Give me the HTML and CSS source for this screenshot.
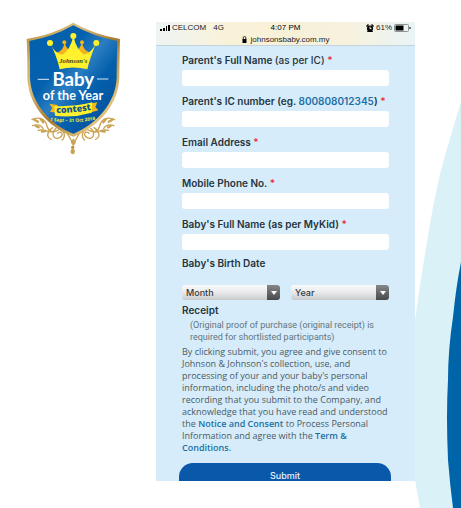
FILE: index.html
```html
<!DOCTYPE html>
<html lang="en">
<head>
<meta charset="utf-8">
<meta name="viewport" content="width=device-width, initial-scale=1">
<title>Baby of the Year Contest</title>
<link rel="stylesheet" href="styles.css">
</head>
<body>
<svg class="waves" viewBox="0 0 61 508" preserveAspectRatio="none" aria-hidden="true">
  <path fill="#daf1f7" d="M61 102Q51 134 41 170Q33 204 27 242Q20 284 15 320C9 375 10 430 15 480L20 508H61Z"/>
  <path fill="#0064a8" d="M61 262Q56 287 53 317Q48 350 48 380Q46 415 48 460Q50 485 53 508H61Z"/>
</svg>
<div class="page">
  <aside class="brand">
    <svg class="logo" viewBox="0 0 330 450" role="img" aria-label="Johnson's Baby of the Year contest">
      <defs>
        <linearGradient id="gold" x1="0" x2="1" y1="0" y2="1">
          <stop offset="0" stop-color="#b98d3e"/><stop offset=".3" stop-color="#dcc07c"/><stop offset=".55" stop-color="#a9782d"/><stop offset=".8" stop-color="#dfc27b"/><stop offset="1" stop-color="#b4873c"/>
        </linearGradient>
        <linearGradient id="blue" x1="0" x2="1" y1="0" y2="1">
          <stop offset="0" stop-color="#0260ac"/><stop offset=".35" stop-color="#0561ad"/><stop offset=".5" stop-color="#2a7dc1"/><stop offset=".65" stop-color="#0560ac"/><stop offset="1" stop-color="#024a96"/>
        </linearGradient>
        <path id="ribbonLine" d="M100 294Q160 295 222 283"/>
        <path id="dateLine" d="M78 315Q160 329 238 312"/>
        <g id="flourish" fill="none" stroke="#c9a253" stroke-width="4" stroke-linecap="round">
          <path d="M36 314C54 305 75 310 80 330C85 352 102 355 120 342C130 333 119 322 111 332"/>
          <path d="M38 332C55 326 64 332 69 341M55 346C72 342 78 350 96 351"/>
          <path d="M98 338C82 348 77 365 93 373M108 340C92 355 100 377 119 368C134 359 123 345 113 355"/>
          <path d="M122 345C137 350 135 369 126 375M128 347C148 350 148 375 159 383"/>
          <path stroke-width="7" d="M43 314L54 320M62 312L70 322M48 333L56 337M66 350L76 348"/>
        </g>
      </defs>
      <use href="#flourish"/>
      <use href="#flourish" transform="matrix(-1 0 0 1 320 0)"/>
      <path fill="#c9a253" d="M160 370L168 382L160 394L152 382Z"/>
      <circle cx="158" cy="397" r="5" fill="#b98d3e"/>
      <path fill="#c9a253" d="M158 399C169 406 165 416 158 418C151 416 148 407 158 399Z"/>
      <path fill="url(#gold)" d="M160 23Q222 58 300 72Q298 140 298 186C297 265 238 335 160 365C80 335 23 265 22 186Q23 140 20 72Q98 59 160 23Z"/>
      <path fill="url(#blue)" d="M160 31Q222 65 292 78Q290 140 290 186C289 260 232 327 160 356C87 327 31 260 30 186Q31 140 28 78Q98 66 160 31Z"/>
      <g fill="#f5b320">
        <circle cx="133" cy="82" r="6"/><circle cx="186" cy="82" r="6"/>
        <path d="M110 114Q132 106 133 82Q140 106 160 112Q180 105 186 82Q190 108 210 113L195 140H125Z"/>
      </g>
      <g fill="#fff12d">
        <circle cx="90" cy="84" r="9"/><circle cx="160" cy="63" r="9"/><circle cx="229" cy="84" r="9"/>
        <path d="M90 84Q104 116 127 119Q151 105 160 63Q170 106 193 119Q215 113 229 84Q209 130 202 163Q160 152 119 163Q111 124 90 84Z"/>
      </g>
      <text class="logo-script" x="160" y="143">Johnson's</text>
      <path stroke="#dbe9f5" stroke-width="3" d="M53 193H87M231 192H265"/>
      <text class="logo-title" x="160" y="213">Baby</text>
      <text class="logo-subtitle" x="159" y="254">of the Year</text>
      <path fill="#f2b719" d="M88 266L113 270V294L90 290L97 279ZM207 266L232 262L226 276L235 286L207 294Z"/>
      <path fill="#fff12d" d="M103 273Q160 276 217 262L215 293Q160 309 105 302Z"/>
      <text class="logo-contest"><textPath href="#ribbonLine" startOffset="50%">contest</textPath></text>
      <text class="logo-date"><textPath href="#dateLine" startOffset="50%">1 Sept – 31 Oct 2018</textPath></text>
    </svg>
  </aside>

  <main class="phone">
    <header class="status">
      <div class="carrier">
        <svg class="signal" viewBox="0 0 10 6" aria-hidden="true"><path d="M0 4h2v2H0zM3 3h2v3H3zM6 1h1v5H6zM8 0h2v6H8z"/></svg>
        <span>CELCOM</span><span>4G</span>
      </div>
      <div class="clock">4:07 PM</div>
      <div class="power">
        <svg class="alarm" viewBox="0 0 8 8" aria-hidden="true"><circle cx="4" cy="4.5" r="3.1"/><path d="M0 2L2 0l1 1-2 2zM8 2L6 0 5 1l2 2zM1 8l1-2h4l1 2z"/><path class="hands" d="M4 2.7v2h1.5"/></svg>
        <span>61%</span>
        <svg class="battery" viewBox="0 0 17 8" aria-hidden="true"><rect class="case" x=".5" y=".5" width="14" height="7" rx="1"/><path d="M1.5 1.5h8v5h-8zM15.5 3h1v2h-1z"/></svg>
      </div>
      <div class="address">
        <svg class="lock" viewBox="0 0 5 7" aria-hidden="true"><path d="M.5 3h4v4h-4z"/><path class="shackle" d="M1.2 3V1.8a1.3 1.3 0 0 1 2.6 0V3"/></svg>
        <span>johnsonsbaby.com.my</span>
      </div>
    </header>

    <form class="form">
      <div class="field">
        <label for="parent">Parent's Full Name <span class="light">(as per IC)</span> <span class="req">*</span></label>
        <input id="parent" type="text">
      </div>
      <div class="field">
        <label for="ic">Parent's IC number (eg. <span class="sample">800808012345</span>) <span class="req">*</span></label>
        <input id="ic" type="text">
      </div>
      <div class="field">
        <label for="email">Email Address <span class="req">*</span></label>
        <input id="email" type="email">
      </div>
      <div class="field">
        <label for="mobile">Mobile Phone No. <span class="req">*</span></label>
        <input id="mobile" type="tel">
      </div>
      <div class="field">
        <label for="baby">Baby's Full Name (as per MyKid) <span class="req">*</span></label>
        <input id="baby" type="text">
      </div>
      <fieldset class="birth">
        <legend>Baby's Birth Date</legend>
        <div class="selects">
          <div class="select">
            <select aria-label="Month"><option>Month</option></select>
            <span class="arrow"></span>
          </div>
          <div class="select">
            <select aria-label="Year"><option>Year</option></select>
            <span class="arrow"></span>
          </div>
        </div>
      </fieldset>
      <h2 class="heading">Receipt</h2>
      <p class="hint">(Original proof of purchase (original receipt) is required for shortlisted participants)</p>
      <p class="consent">By clicking submit, you agree and give consent to Johnson &amp; Johnson's collection, use, and processing of your and your baby's personal information, including the photo/s and video recording that you submit to the Company, and acknowledge that you have read and understood the <a href="#">Notice and Consent</a> to Process Personal Information and agree with the <a href="#">Term &amp;<br>Conditions.</a></p>
      <button class="submit" type="submit">Submit</button>
    </form>
  </main>
</div>
</body>
</html>
```

FILE: styles.css
```css
* {
  box-sizing: border-box;
}

body {
  margin: 0;
  min-height: 100vh;
  position: relative;
  background: #fff;
  color: #26343d;
  font: 500 8px/12px Inter, "Liberation Sans", sans-serif;
}

.waves {
  position: absolute;
  top: 0;
  right: 0;
  width: 61px;
  height: 100%;
}

.page {
  position: relative;
  display: grid;
  grid-template-columns: 156fr 259fr 46fr;
  align-items: start;
}

.brand {
  padding: 15px 26px 0 20px;
}

.logo {
  display: block;
  width: 100%;
}

.logo text {
  text-anchor: middle;
}

.logo-script {
  font: italic 700 20px "Liberation Serif", serif;
  fill: #39421e;
}

.logo-title {
  font: 700 56px Lato, sans-serif;
  fill: #fff;
}

.logo-subtitle {
  font: 700 38px Lato, sans-serif;
  fill: #fff;
}

.logo-contest {
  font: 800 27px "Open Sans", sans-serif;
  fill: #15578c;
}

.logo-date {
  font: 700 14px "Open Sans", sans-serif;
  fill: #f4ed3b;
}

.phone {
  margin-top: 22px;
  background: #d6ecfa;
}

.status {
  display: grid;
  grid-template-columns: 1fr auto 1fr;
  align-items: center;
  padding: 0 4px;
  border-bottom: 1px solid #c3d3da;
  background: linear-gradient(90deg, #eef4f3, #faf2d8 30%, #f7f0d9 55%, #f7f2df 75%, #eaf4f7);
  color: #222;
  font: 8px/12px "Liberation Sans", sans-serif;
}

.carrier,
.power,
.address {
  display: flex;
  align-items: center;
}

.carrier {
  gap: 7px;
}

.signal {
  width: 10px;
  height: 6px;
  margin-right: -5px;
}

.clock {
  color: #000;
}

.power {
  justify-content: flex-end;
  gap: 2px;
}

.alarm {
  width: 8px;
  height: 8px;
}

.hands {
  fill: none;
  stroke: #fff;
  stroke-width: 1;
}

.battery {
  width: 17px;
  height: 8px;
}

.case {
  fill: none;
  stroke: #8e9292;
}

.address {
  grid-column: 1 / -1;
  justify-content: center;
  gap: 4px;
  line-height: 11px;
}

.lock {
  width: 5px;
  height: 7px;
}

.shackle {
  fill: none;
  stroke: #222;
}

.form {
  padding: 8px 26px 0;
}

.field {
  display: grid;
  gap: 4px;
  margin-bottom: 9px;
}

label,
legend,
.heading {
  padding: 0;
  font-size: 10px;
  font-weight: 600;
  line-height: 12px;
}

.light {
  font-weight: 500;
}

.sample {
  color: #1c70a8;
}

.req {
  color: #e8333d;
}

input {
  width: 100%;
  height: 16px;
  padding: 0 6px;
  border: 0;
  border-radius: 3px;
  background: #fff;
  font: inherit;
}

.birth {
  margin: -2px 0 4px;
  padding: 0;
  border: 0;
}

.selects {
  display: grid;
  grid-template-columns: 1fr 1fr;
  gap: 11px;
  padding-top: 16px;
}

.select {
  position: relative;
}

select {
  display: block;
  width: 100%;
  height: 15px;
  padding: 0 16px 0 4px;
  border: 0;
  border-radius: 3px;
  appearance: none;
  background: linear-gradient(#fafafa, #e9e9eb 50%, #c8cacc);
  color: #333b40;
  font: 500 9px/15px Inter, sans-serif;
}

.arrow {
  position: absolute;
  inset: 0 0 0 auto;
  display: grid;
  place-items: center;
  width: 13px;
  border-radius: 0 3px 3px 0;
  background: linear-gradient(#858789, #48494b);
  pointer-events: none;
}

.arrow::before {
  content: "";
  border: 3px solid transparent;
  border-top: 4px solid #fff;
  border-bottom: 0;
}

.heading {
  margin: 0 0 3px;
}

.hint {
  margin: 0 0 3px;
  padding-left: 8px;
  color: #64747d;
  font: 400 9px/12px Roboto, sans-serif;
}

.consent {
  margin: 0 1px 9px 0;
  color: #4a5a64;
  font: 500 9px/12px "Open Sans", sans-serif;
}

.consent a {
  color: #1c70a0;
  font-weight: 600;
  text-decoration: none;
}

.submit {
  display: block;
  width: calc(100% + 5px);
  margin: 0 -3px;
  padding: 7px 0 0;
  border: 0;
  border-radius: 14px 14px 0 0;
  background: #0958aa;
  color: #e6f2fc;
  font: 500 9px/11px Inter, sans-serif;
}
```
